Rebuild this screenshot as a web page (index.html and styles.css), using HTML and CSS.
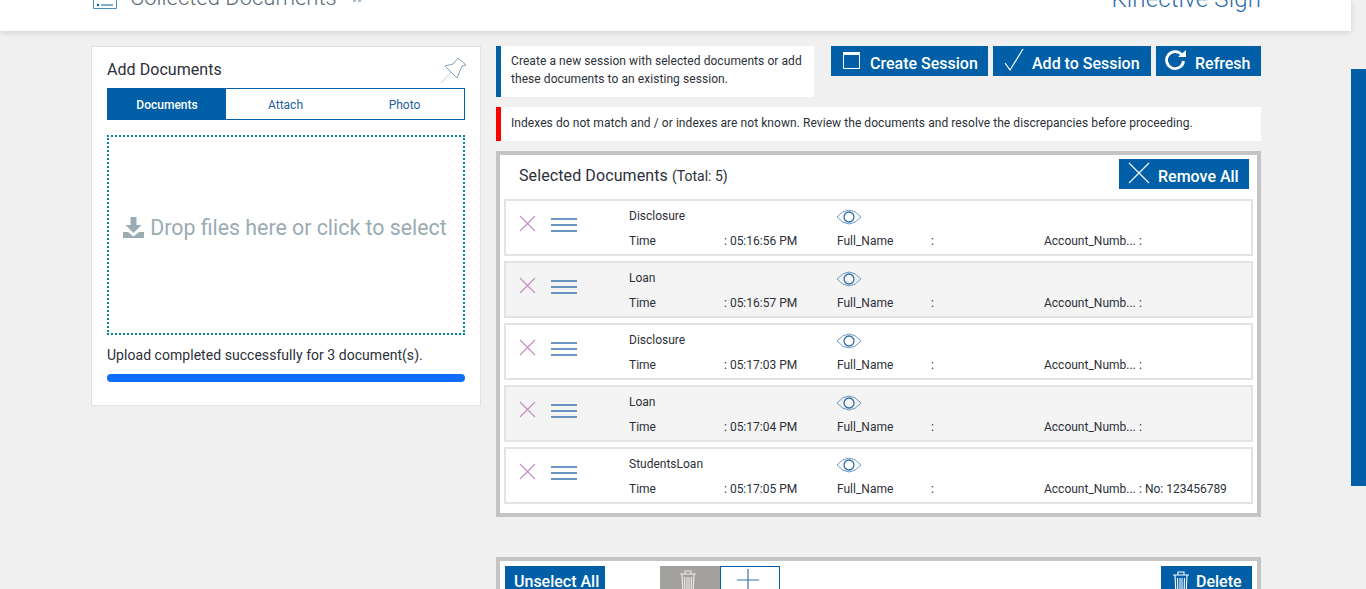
FILE: index.html
```html
<!DOCTYPE html>
<html lang="en">
<head>
<meta charset="utf-8">
<title>Collected Documents</title>
<link rel="stylesheet" href="styles.css">
</head>
<body>
<div class="page">
  <div class="main">
    <header class="topbar">
      <div class="topbar-left">
        <svg class="head-icon" viewBox="0 0 24 16" width="24" height="16"><path d="M.5-6h23v14.5H.5z" fill="none" stroke="#4a8fc4"/><circle cx="5" cy="5" r="1.2" fill="#00609f"/><path d="M8 5h12" stroke="#00609f"/></svg>
        <span class="head-title">Collected Documents</span>
        <svg class="head-pin" viewBox="0 0 10 4" width="10" height="4"><path d="M1 0v2h3V0M6 0v2h3V0" fill="#a9bfd0"/></svg>
      </div>
      <span class="head-brand">Kinective Sign</span>
    </header>
    <div class="content">
      <section class="add-card">
        <div class="card-head">
          <h2 class="card-title">Add Documents</h2>
          <svg class="pin" viewBox="0 0 28 28" width="28" height="28"><path d="M18 2l8 7-4 1-5 12L5 10l8-2z" fill="none" stroke="#7f9fbc" stroke-width="1"/><path d="M11 16L1 27" stroke="#b9c8d6" stroke-width=".8"/></svg>
        </div>
        <div class="tabs">
          <div class="tab tab-active">Documents</div>
          <div class="tab">Attach</div>
          <div class="tab">Photo</div>
        </div>
        <div class="dropzone">
          <svg viewBox="0 0 21 21" width="21" height="21"><path d="M7.5 0h6v8h5l-8 8-8-8h5zM0 15h5l5.500 4.500 5.500-4.500h5v6H0z" fill="#9aabb3"/></svg>
          <span>Drop files here or click to select</span>
        </div>
        <p class="upload-msg">Upload completed successfully for 3 document(s).</p>
        <div class="progress"></div>
      </section>
      <section class="right">
        <div class="top-row">
          <div class="note note-info">Create a new session with selected documents or add these documents to an existing session.</div>
          <div class="actions">
            <button class="btn btn-create"><svg viewBox="0 0 17 17" width="17" height="17"><path d="M.5 2.500h16v14H.5z" fill="none" stroke="#fff"/><path d="M0 0h17v2H0z" fill="#fff"/></svg>Create Session</button>
            <button class="btn btn-add"><svg viewBox="0 0 20 24" width="20" height="24"><path d="M1 15l5 7L19 1" fill="none" stroke="#fff" stroke-width="1.200"/></svg>Add to Session</button>
            <button class="btn btn-refresh"><svg viewBox="0 0 22 22" width="22" height="22"><path d="M18 6.200A8.500 8.500 0 1 0 19.500 12" fill="none" stroke="#fff" stroke-width="2.800"/><path d="M14 8h8V1z" fill="#fff"/></svg>Refresh</button>
          </div>
        </div>
        <div class="note note-alert">Indexes do not match and / or indexes are not known. Review the documents and resolve the discrepancies before proceeding.</div>
        <div class="panel selected">
          <div class="panel-head">
            <div class="panel-title">Selected Documents <small>(Total: 5)</small></div>
            <button class="btn btn-remove"><svg viewBox="0 0 22 22" width="22" height="22"><path d="M1 1l20 20M21 1L1 21" stroke="#fff" stroke-width="1.100"/></svg>Remove All</button>
          </div>
          <div class="rows">
            <article class="row">
              <div class="row-icons"><svg class="row-x" viewBox="0 0 17 17" width="17" height="17"><path d="M1 1l15 15M16 1L1 16" stroke="#c58ac6" stroke-width="1.100"/></svg><svg viewBox="0 0 26 16" width="26" height="16"><path d="M0 2h26M0 8h26M0 14h26" stroke="#3a74ad" stroke-width="1.500"/></svg></div>
              <div class="name">Disclosure</div>
              <svg class="eye" viewBox="0 0 26 16" width="26" height="16"><path d="M1 8q12-14 24 0q-12 14-24 0z" fill="none" stroke="#5f8fb8" stroke-width=".9"/><circle cx="13" cy="8" r="5" fill="none" stroke="#2d6ea8" stroke-width="1.300"/></svg>
              <div class="c2">Time</div><div class="c3">: 05:16:56 PM</div><div class="c4">Full_Name</div><div class="c5">:</div><div class="c6">Account_Numb...</div><div class="c7">:</div>
            </article>
            <article class="row">
              <div class="row-icons"><svg class="row-x" viewBox="0 0 17 17" width="17" height="17"><path d="M1 1l15 15M16 1L1 16" stroke="#c58ac6" stroke-width="1.100"/></svg><svg viewBox="0 0 26 16" width="26" height="16"><path d="M0 2h26M0 8h26M0 14h26" stroke="#3a74ad" stroke-width="1.500"/></svg></div>
              <div class="name">Loan</div>
              <svg class="eye" viewBox="0 0 26 16" width="26" height="16"><path d="M1 8q12-14 24 0q-12 14-24 0z" fill="none" stroke="#5f8fb8" stroke-width=".9"/><circle cx="13" cy="8" r="5" fill="none" stroke="#2d6ea8" stroke-width="1.300"/></svg>
              <div class="c2">Time</div><div class="c3">: 05:16:57 PM</div><div class="c4">Full_Name</div><div class="c5">:</div><div class="c6">Account_Numb...</div><div class="c7">:</div>
            </article>
            <article class="row">
              <div class="row-icons"><svg class="row-x" viewBox="0 0 17 17" width="17" height="17"><path d="M1 1l15 15M16 1L1 16" stroke="#c58ac6" stroke-width="1.100"/></svg><svg viewBox="0 0 26 16" width="26" height="16"><path d="M0 2h26M0 8h26M0 14h26" stroke="#3a74ad" stroke-width="1.500"/></svg></div>
              <div class="name">Disclosure</div>
              <svg class="eye" viewBox="0 0 26 16" width="26" height="16"><path d="M1 8q12-14 24 0q-12 14-24 0z" fill="none" stroke="#5f8fb8" stroke-width=".9"/><circle cx="13" cy="8" r="5" fill="none" stroke="#2d6ea8" stroke-width="1.300"/></svg>
              <div class="c2">Time</div><div class="c3">: 05:17:03 PM</div><div class="c4">Full_Name</div><div class="c5">:</div><div class="c6">Account_Numb...</div><div class="c7">:</div>
            </article>
            <article class="row">
              <div class="row-icons"><svg class="row-x" viewBox="0 0 17 17" width="17" height="17"><path d="M1 1l15 15M16 1L1 16" stroke="#c58ac6" stroke-width="1.100"/></svg><svg viewBox="0 0 26 16" width="26" height="16"><path d="M0 2h26M0 8h26M0 14h26" stroke="#3a74ad" stroke-width="1.500"/></svg></div>
              <div class="name">Loan</div>
              <svg class="eye" viewBox="0 0 26 16" width="26" height="16"><path d="M1 8q12-14 24 0q-12 14-24 0z" fill="none" stroke="#5f8fb8" stroke-width=".9"/><circle cx="13" cy="8" r="5" fill="none" stroke="#2d6ea8" stroke-width="1.300"/></svg>
              <div class="c2">Time</div><div class="c3">: 05:17:04 PM</div><div class="c4">Full_Name</div><div class="c5">:</div><div class="c6">Account_Numb...</div><div class="c7">:</div>
            </article>
            <article class="row">
              <div class="row-icons"><svg class="row-x" viewBox="0 0 17 17" width="17" height="17"><path d="M1 1l15 15M16 1L1 16" stroke="#c58ac6" stroke-width="1.100"/></svg><svg viewBox="0 0 26 16" width="26" height="16"><path d="M0 2h26M0 8h26M0 14h26" stroke="#3a74ad" stroke-width="1.500"/></svg></div>
              <div class="name">StudentsLoan</div>
              <svg class="eye" viewBox="0 0 26 16" width="26" height="16"><path d="M1 8q12-14 24 0q-12 14-24 0z" fill="none" stroke="#5f8fb8" stroke-width=".9"/><circle cx="13" cy="8" r="5" fill="none" stroke="#2d6ea8" stroke-width="1.300"/></svg>
              <div class="c2">Time</div><div class="c3">: 05:17:05 PM</div><div class="c4">Full_Name</div><div class="c5">:</div><div class="c6">Account_Numb...</div><div class="c7">: No: 123456789</div>
            </article>
          </div>
        </div>
        <div class="panel bottom">
          <button class="btn btn-unselect">Unselect All</button>
          <div class="tool tool-trash"><svg viewBox="0 0 18 24" width="18" height="24"><path d="M1 4h16M6 4V1h6v3M3 4l1 20h10l1-20M5.500 7l.5 17M8 7v17M10 7v17M12.500 7l-.5 17" fill="none" stroke="#f0eeea" stroke-width="1.100"/></svg></div>
          <div class="tool tool-add"><svg viewBox="0 0 22 22" width="22" height="22"><path d="M11 0v22M0 11h22" stroke="#3a74ad" stroke-width="1.200"/></svg></div>
          <button class="btn btn-delete"><svg viewBox="0 0 18 24" width="18" height="24"><path d="M1 4h16M6 4V1h6v3M3 4l1 20h10l1-20M5.500 7l.5 17M8 7v17M10 7v17M12.500 7l-.5 17" fill="none" stroke="#fff" stroke-width="1.100"/></svg>Delete</button>
        </div>
      </section>
    </div>
  </div>
  <aside class="scrolltrack"><div class="scrollthumb"></div></aside>
</div>
</body>
</html>
```
FILE: styles.css
```css
* { box-sizing: border-box; }
html, body { margin: 0; height: 589px; overflow: hidden; }
body { background: #f0f0f0; font-family: Roboto, "Liberation Sans", sans-serif; color: #2c3038; }
.page { display: flex; height: 589px; overflow: hidden; }
.main { width: 1351px; flex: none; }
.topbar { height: 31px; background: #fff; box-shadow: 0 2px 6px rgba(0,0,0,.12); display: flex; justify-content: space-between; align-items: flex-start; padding: 0 90px 0 93px; overflow: hidden; }
.topbar-left { display: flex; align-items: flex-start; }
.head-icon { margin: 0 13px 0 0; }
.head-title { font-size: 22px; font-weight: 300; line-height: 26px; margin-top: -15px; color: #5c6b78; }
.head-pin { margin-left: 15px; }
.head-brand { font-size: 24px; font-weight: 300; line-height: 28px; margin-top: -15px; letter-spacing: .15px; color: #2f6ca8; }
.content { display: flex; gap: 15px; padding: 15px 0 0 91px; align-items: flex-start; }
.add-card { width: 390px; height: 360px; background: #fff; border: 1px solid #e2e2e2; padding: 0 15px; }
.card-head { height: 41px; display: flex; justify-content: space-between; align-items: center; padding-top: 4px; }
.card-title { margin: 0; font-size: 16px; font-weight: 400; letter-spacing: .05px; }
.pin { margin-top: 1px; margin-right: -3px; }
.tabs { display: grid; grid-template-columns: 118px 1fr 1fr; height: 32px; border: 1px solid #005fa6; }
.tab { display: flex; align-items: center; justify-content: center; padding-top: 2px; font-size: 12px; color: #1e5f9e; }
.tab-active { background: #005fa6; color: #fff; font-weight: 500; }
.dropzone { margin-top: 15px; height: 200px; border: 2px dotted #00859a; display: flex; align-items: center; justify-content: center; gap: 6px; padding: 0 2px 16px 0; color: #9aabb3; font-size: 21.33px; }
.upload-msg { margin: 11px 0 0; font-size: 14px; line-height: 18px; letter-spacing: .04px; }
.progress { margin-top: 10px; height: 8px; border-radius: 4px; background: #0d6efd; }
.right { width: 765px; flex: none; }
.top-row { display: flex; justify-content: space-between; align-items: flex-start; }
.note { background: #fff; font-size: 12px; line-height: 18px; padding-left: 10px; letter-spacing: .066px; }
.note-info { width: 318px; height: 51px; border-left: 5px solid #005fa6; padding: 6px 10px 0 10px; }
.note-alert { margin-top: 10px; height: 34px; border-left: 5px solid #f00; display: flex; align-items: center; padding-bottom: 2px; }
.actions { display: flex; gap: 5px; }
.btn { border: 0; background: #005fa6; color: #fff; font-family: inherit; font-size: 16px; font-weight: 500; display: flex; align-items: center; height: 30px; padding: 4px 0 0; }
.btn-create { width: 157px; padding-left: 12px; gap: 10px; }
.btn-create svg { margin-top: -6px; }
.btn-add { width: 158px; padding-left: 11px; gap: 8px; }
.btn-add svg { margin-top: -7px; }
.btn-refresh { width: 105px; padding-left: 8px; gap: 9px; }
.btn-refresh svg { margin-top: -7px; }
.panel { background: #fff; border: 4px solid #c4c4c4; }
.selected { margin-top: 10px; height: 366px; padding: 4px; }
.panel-head { height: 40px; display: flex; justify-content: space-between; align-items: flex-start; padding: 0 4px 0 15px; }
.panel-title { font-size: 16px; line-height: 34px; letter-spacing: .1px; }
.panel-title small { font-size: 14px; letter-spacing: 0; }
.btn-remove { width: 130px; padding-left: 9px; gap: 8px; }
.btn-remove svg { margin-top: -7px; }
.rows { display: flex; flex-direction: column; gap: 5px; }
.row { height: 57px; border: 2px solid #e3e3e3; display: grid; grid-template-columns: 123px 95px 113px 94px 113px 95px 1fr; grid-template-rows: 25px 25px; padding-top: 2px; font-size: 12px; align-items: center; }
.row:nth-child(even) { background: #f4f4f4; }
.row-icons { grid-column: 1; grid-row: 1 / span 2; align-self: start; display: flex; gap: 15px; align-items: flex-start; padding: 14px 0 0 13px; }
.row-x { margin-top: -2px; }
.name { grid-column: 2 / span 2; grid-row: 1; }
.eye { grid-column: 4; grid-row: 1; margin: 3px 0 0 -1px; }
.c2 { grid-column: 2; grid-row: 2; }
.c3 { grid-column: 3; grid-row: 2; }
.c4 { grid-column: 4; grid-row: 2; }
.c5 { grid-column: 5; grid-row: 2; }
.c6 { grid-column: 6; grid-row: 2; }
.c7 { grid-column: 7; grid-row: 2; }
.bottom { margin-top: 40px; height: 60px; display: flex; align-items: flex-start; padding: 5px 5px 0 5px; }
.btn-unselect { width: 100px; height: 40px; padding: 0 0 10px 9px; }
.tool { width: 60px; height: 40px; display: flex; justify-content: center; padding-top: 4px; }
.tool-trash { margin-left: 55px; background: #a3a19e; }
.tool-trash svg { margin-right: 4px; }
.tool-add { border: 1px solid #005fa6; background: #fff; padding-top: 2px; }
.tool-add svg { margin-right: 4px; }
.btn-delete { margin-left: auto; width: 91px; height: 40px; padding: 0 0 10px 11px; gap: 6px; }
.btn-delete svg { margin-top: 4px; }
.scrolltrack { flex: none; width: 15px; padding-top: 69px; }
.scrollthumb { height: 417px; background: #005fa6; }
```
